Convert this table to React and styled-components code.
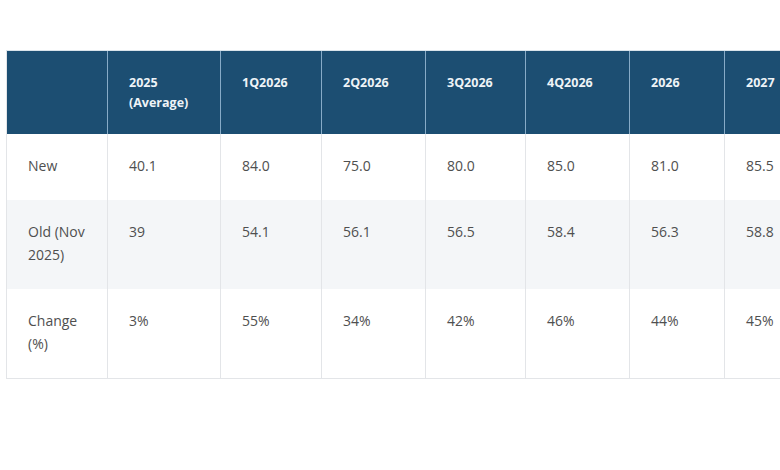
import React from 'react';
import styled, { createGlobalStyle } from 'styled-components';

const GlobalStyle = createGlobalStyle`
  html, body {
    margin: 0;
    padding: 0;
    background: #ffffff;
  }
  body {
    font-family: "Open Sans", "Noto Sans", "Liberation Sans", sans-serif;
  }
`;

// Page holding the table, the table runs off the right edge
const Page = styled.div`
  width: 780px;
  height: 470px;
  overflow: hidden;
  padding: 50px 0 0 6px;
  box-sizing: border-box;
`;

const Table = styled.table`
  border-collapse: collapse;
  table-layout: fixed;
  width: 818px;
  border: 1px solid #e3e5e8;
`;

const HeadCell = styled.th`
  background-color: #1c4e72;
  color: #eef3f7;
  font-size: 12.5px;
  font-weight: 700;
  line-height: 20px;
  text-align: left;
  vertical-align: top;
  padding: 22px 21px 21px;
  border-left: 1px solid #87abc7;
  border-top: 1px solid #d9e3ea;
  &:first-child {
    border-left: 1px solid #e3e5e8;
  }
`;

const Row = styled.tr`
  background-color: ${(p) => (p.$shaded ? '#f4f6f8' : '#ffffff')};
`;

const Cell = styled.td`
  color: #4f4f4f;
  font-size: 14px;
  line-height: 23px;
  vertical-align: top;
  padding: 20px 21px 23px;
  border-left: 1px solid #e3e5e8;
`;

const columns = [
  { label: '', width: 101 },
  { label: '2025 (Average)', width: 113 },
  { label: '1Q2026', width: 101 },
  { label: '2Q2026', width: 104 },
  { label: '3Q2026', width: 100 },
  { label: '4Q2026', width: 104 },
  { label: '2026', width: 95 },
  { label: '2027', width: 100 },
];

const rows = [
  ['New', '40.1', '84.0', '75.0', '80.0', '85.0', '81.0', '85.5'],
  ['Old (Nov 2025)', '39', '54.1', '56.1', '56.5', '58.4', '56.3', '58.8'],
  ['Change (%)', '3%', '55%', '34%', '42%', '46%', '44%', '45%'],
];

const App = () => {
  return (
    <>
      <GlobalStyle />
      <Page>
        <Table>
          <colgroup>
            {columns.map((c, i) => (
              <col key={i} style={{ width: c.width }} />
            ))}
          </colgroup>
          <thead>
            <tr>
              {columns.map((c, i) => (
                <HeadCell key={i}>{c.label}</HeadCell>
              ))}
            </tr>
          </thead>
          <tbody>
            {rows.map((r, i) => (
              <Row key={i} $shaded={i === 1}>
                {r.map((v, j) => (
                  <Cell key={j}>{v}</Cell>
                ))}
              </Row>
            ))}
          </tbody>
        </Table>
      </Page>
    </>
  );
};

export default App;
